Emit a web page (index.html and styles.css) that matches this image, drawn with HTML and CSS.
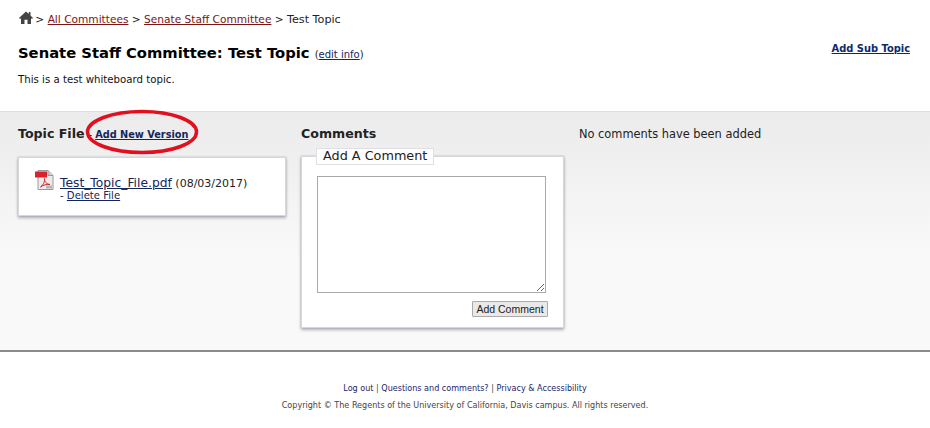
FILE: index.html
```html
<!DOCTYPE html>
<html lang="en">
  <head>
    <meta charset="UTF-8" />
    <title>Senate Staff Committee: Test Topic</title>
    <link rel="stylesheet" href="styles.css">
  </head>
  <body>
    <div class="top">
      <div class="breadcrumb">
        <svg class="home-icon" viewBox="0 0 14 13" width="14" height="13"><path d="M7 0.500 L0 7 L1 8 L2 7.200 V13 H5.500 V8.800 H8.500 V13 H12 V7.200 L13 8 L14 7 L11.500 4.600 V1 H9.800 V3 Z" fill="#444"/></svg>
        &gt; <a href="#">All Committees</a> &gt; <a href="#">Senate Staff Committee</a> &gt; <span class="current">Test Topic</span>
      </div>
      <div class="title-row">
        <h1 class="title">Senate Staff Committee: Test Topic <span class="edit">(<a href="#">edit info</a>)</span></h1>
        <a class="sub-topic" href="#">Add Sub Topic</a>
      </div>
      <p class="desc">This is a test whiteboard topic.</p>
    </div>

    <div class="band">
      <div class="col-file">
        <div class="file-head">
          <h2>Topic File</h2>
          <span class="dash">-</span>
          <a class="add-version" href="#">Add New Version</a>
          <svg class="circle" width="118" height="50" viewBox="0 0 118 50"><ellipse cx="59" cy="25" rx="54.500" ry="20.500" fill="none" stroke="#e2101f" stroke-width="3.500"/></svg>
        </div>
        <div class="card file-card">
          <svg class="pdf-icon" width="19" height="20" viewBox="0 0 19 20">
            <path d="M3 .5H13L18 5.500V19.500H3Z" fill="#ececec" stroke="#9a9a9a"/>
            <path d="M13 .5V5.500H18" fill="#ccc" stroke="#9a9a9a"/>
            <rect x="0" y="1.500" width="12" height="6" fill="#d8232a"/>
            <path d="M5.500 17C9 14 10 11 9.500 8.500C9 11 11 14 15 14.500C12 14 8 15 5.500 17Z" fill="none" stroke="#c9252b"/>
            <rect x="11" y="15.500" width="6" height="3" fill="#b5b5b5"/>
          </svg>
          <div class="file-text">
            <div><a class="file-link" href="#">Test_Topic_File.pdf</a> (08/03/2017)</div>
            <div class="delete">- <a href="#">Delete File</a></div>
          </div>
        </div>
      </div>

      <div class="col-comments">
        <h2>Comments</h2>
        <div class="card comment-card">
          <div class="legend">Add A Comment</div>
          <textarea class="comment-box"></textarea>
          <div class="btn-row"><button class="btn">Add Comment</button></div>
        </div>
      </div>

      <div class="no-comments">No comments have been added</div>
    </div>

    <div class="footer">
      <p class="foot-links"><a href="#">Log out</a> | <a href="#">Questions and comments?</a> | <a href="#">Privacy &amp; Accessibility</a></p>
      <p class="copy">Copyright © The Regents of the University of California, Davis campus. All rights reserved.</p>
    </div>
  </body>
</html>
```

FILE: styles.css
```css
* {
  box-sizing: border-box;
}

body {
  margin: 0;
  font-family: "DejaVu Sans", sans-serif;
  color: #111;
  background: white;
  overflow: hidden;
}

a {
  color: #14265c;
}

h2 {
  margin: 0;
  font-size: 12.600px;
  font-weight: bold;
  color: #222;
}

.top {
  height: 111px;
  padding: 11px 20px 0 18px;
}

.breadcrumb {
  font-size: 10.600px;
  height: 16px;
  line-height: 16px;
  color: #222;
}

.breadcrumb a {
  color: #7c1414;
}

.current {
  font-size: 11.200px;
}

.home-icon {
  vertical-align: -1px;
  margin-left: 1px;
  margin-right: -1px;
}

.title-row {
  display: flex;
  justify-content: space-between;
  align-items: flex-start;
  margin-top: 14px;
}

.title {
  margin: 0;
  font-size: 14.750px;
  line-height: 24px;
  font-weight: bold;
  color: #000;
}

.edit {
  font-size: 10px;
  font-weight: normal;
  color: #222;
}

.sub-topic {
  font-size: 9.900px;
  font-weight: bold;
  color: #0b2a6e;
  line-height: 14px;
  margin-top: 1px;
}

.desc {
  margin: 6px 0 0;
  font-size: 10.200px;
  line-height: 14px;
}

.band {
  height: 241px;
  display: flex;
  align-items: flex-start;
  padding: 14px 0 0 18px;
  background: linear-gradient(#ebebeb, #f9f9f9 60%);
  border-top: 1px solid #dedede;
  border-bottom: 2px solid #8a8a8a;
}

.col-file {
  width: 268px;
  margin-right: 15px;
}

.file-head {
  position: relative;
  display: flex;
  align-items: baseline;
  height: 16px;
}

.dash {
  font-size: 10px;
  margin: 0 3px 0 4px;
}

.add-version {
  font-size: 9.750px;
  font-weight: bold;
}

.circle {
  position: absolute;
  left: 65px;
  top: -19px;
}

.card {
  background: white;
  border: 1px solid #d5d7dc;
  box-shadow: 0 2px 3px rgba(90, 95, 110, 0.45), 0 0 2px rgba(90, 95, 110, 0.3);
}

.file-card {
  display: flex;
  height: 59px;
  margin-top: 15px;
  padding: 12px 0 0 16px;
}

.pdf-icon {
  flex-shrink: 0;
  margin-right: 6px;
}

.file-text {
  font-size: 11px;
  line-height: 11px;
  padding-top: 8px;
  color: #222;
}

.file-link {
  font-size: 12.300px;
}

.delete {
  font-size: 10.100px;
  margin-top: 1px;
}

.col-comments {
  width: 263px;
  margin-right: 15px;
}

.comment-card {
  position: relative;
  height: 172px;
  margin-top: 15px;
  padding: 19px 0 0 15px;
}

.legend {
  position: absolute;
  left: 14px;
  top: -9px;
  height: 17px;
  padding: 0 6px;
  font-size: 12.800px;
  line-height: 14px;
  background: white;
  border: 1px solid #dfe0e4;
  color: #222;
}

.comment-box {
  display: block;
  width: 229px;
  height: 117px;
  border: 1px solid #aaa;
  background: white;
}

.btn-row {
  width: 231px;
  margin-top: 5px;
  text-align: right;
}

.btn {
  width: 76px;
  height: 16px;
  padding: 0;
  font-family: "Liberation Sans", sans-serif;
  font-size: 10.500px;
  line-height: 14px;
  color: #222;
  background: #e9e9e9;
  border: 1px solid #aaa;
  border-radius: 1px;
}

.no-comments {
  font-size: 11.400px;
  line-height: 16px;
  color: #222;
}

.footer {
  text-align: center;
  font-size: 8.070px;
  line-height: 12px;
  padding-top: 31px;
  color: #444;
}

.footer p {
  margin: 0;
}

.foot-links a {
  color: #1d1d6b;
  text-decoration: none;
}

.footer .copy {
  margin-top: 5px;
}
```
